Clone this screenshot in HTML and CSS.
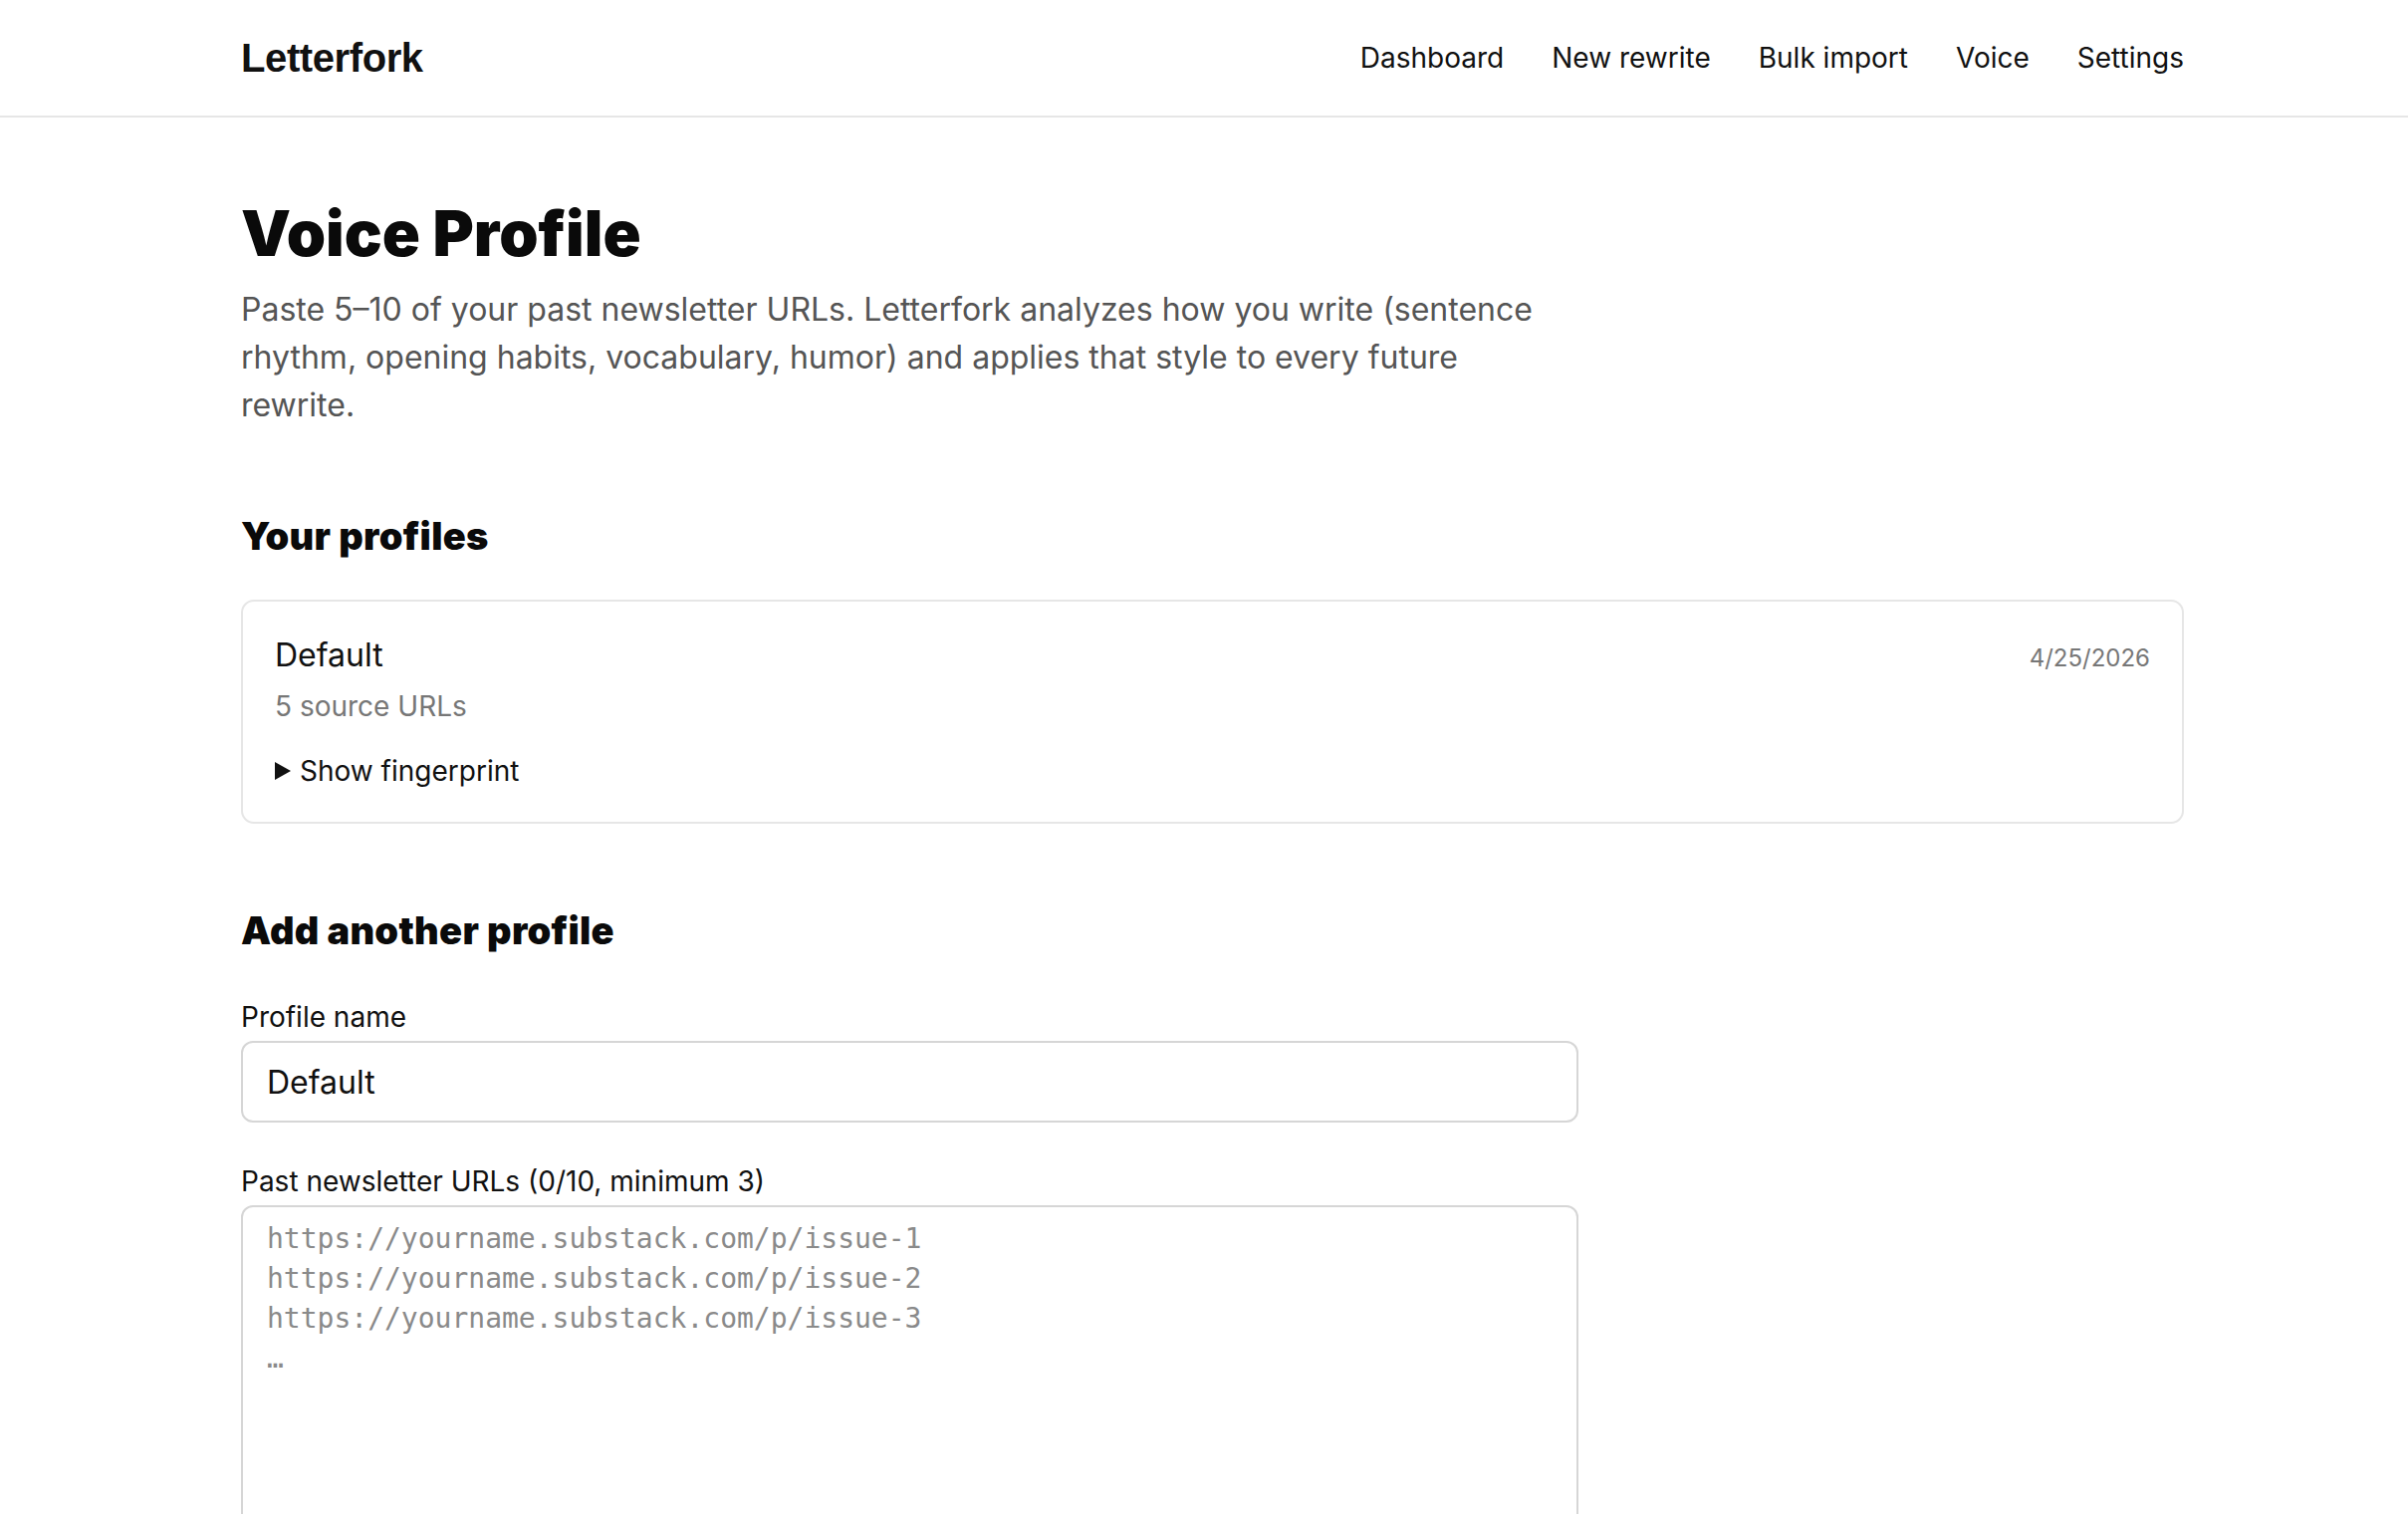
FILE: index.html
```html
<!DOCTYPE html>
<html lang="en">
<head>
    <meta charset="UTF-8">
    <meta name="viewport" content="width=device-width, initial-scale=1.0">
    <title>Voice Profile · Letterfork</title>
    <link rel="stylesheet" href="styles.css">
</head>
<body>
    <header class="topbar">
        <div class="wrap topbar-inner">
            <a class="brand" href="#">Letterfork</a>
            <nav class="nav">
                <a href="#">Dashboard</a>
                <a href="#">New rewrite</a>
                <a href="#">Bulk import</a>
                <a href="#">Voice</a>
                <a href="#">Settings</a>
            </nav>
        </div>
    </header>

    <main class="wrap page">
        <h1>Voice Profile</h1>
        <p class="lead">Paste 5–10 of your past newsletter URLs. Letterfork analyzes how you write (sentence rhythm, opening habits, vocabulary, humor) and applies that style to every future rewrite.</p>

        <!-- Saved profiles -->
        <section class="block">
            <h2>Your profiles</h2>
            <div class="profile-card">
                <div class="profile-head">
                    <span class="profile-name">Default</span>
                    <span class="profile-date">4/25/2026</span>
                </div>
                <div class="profile-meta">5 source URLs</div>
                <details class="fingerprint">
                    <summary>Show fingerprint</summary>
                </details>
            </div>
        </section>

        <!-- New profile form -->
        <section class="block">
            <h2>Add another profile</h2>
            <form class="profile-form">
                <div class="field">
                    <label for="profileName">Profile name</label>
                    <input type="text" id="profileName" value="Default">
                </div>
                <div class="field">
                    <label for="profileUrls">Past newsletter URLs (0/10, minimum 3)</label>
                    <textarea id="profileUrls" placeholder="https://yourname.substack.com/p/issue-1&#10;https://yourname.substack.com/p/issue-2&#10;https://yourname.substack.com/p/issue-3&#10;…"></textarea>
                </div>
            </form>
        </section>
    </main>
</body>
</html>
```

FILE: styles.css
```css
body {
    margin: 0;
    padding: 0;
    font-family: Inter, "Noto Sans", sans-serif;
    color: #111;
    background: #fff;
}

a {
    color: inherit;
    text-decoration: none;
}

.wrap {
    width: 1951px;
    margin-left: 242px;
}

/* Top bar */
.topbar {
    border-bottom: 2px solid #e6e6e6;
}

.topbar-inner {
    height: 116px;
    display: flex;
    justify-content: space-between;
    align-items: center;
}

.brand {
    font-family: "Liberation Sans", Arial, sans-serif;
    font-weight: 700;
    font-size: 40px;
    letter-spacing: -0.4px;
    color: #111;
}

.nav {
    display: flex;
    gap: 48px;
    font-size: 28px;
}

/* Page */
.page {
    padding-top: 80px;
    padding-bottom: 80px;
}

h1, h2 {
    font-family: Inter, "Liberation Sans", sans-serif;
    font-weight: 900;
    color: #0a0a0a;
    margin: 0;
}

h1 {
    font-size: 63px;
    line-height: 72px;
    margin-bottom: 17px;
}

h2 {
    font-size: 38px;
    line-height: 43px;
    letter-spacing: 0.3px;
    margin-bottom: 42px;
}

.lead {
    margin: 0;
    max-width: 1320px;
    font-size: 32px;
    line-height: 48px;
    color: #555;
}

.block {
    margin-top: 86px;
}

/* Profile card */
.profile-card {
    border: 2px solid #e6e6e6;
    border-radius: 13px;
    padding: 34px 32px 32px;
}

.profile-head {
    display: flex;
    justify-content: space-between;
    align-items: baseline;
}

.profile-name {
    font-size: 32px;
    line-height: 40px;
}

.profile-date {
    font-size: 24px;
    color: #777;
}

.profile-meta {
    margin-top: 12px;
    font-size: 28px;
    line-height: 38px;
    color: #777;
}

.fingerprint {
    margin-top: 27px;
    font-size: 28px;
    line-height: 38px;
}

.fingerprint summary {
    list-style: none;
    display: flex;
    align-items: center;
    gap: 9px;
    cursor: pointer;
}

.fingerprint summary::-webkit-details-marker {
    display: none;
}

/* closed disclosure triangle */
.fingerprint summary::before {
    content: "";
    width: 0;
    height: 0;
    border-left: 16px solid #111;
    border-top: 9px solid transparent;
    border-bottom: 9px solid transparent;
}

.fingerprint[open] summary::before {
    transform: rotate(90deg);
}

/* Form */
.profile-form {
    width: 1343px;
    padding-top: 4px;
}

.field {
    margin-bottom: 40px;
}

.field label {
    display: block;
    font-size: 28px;
    line-height: 38px;
    margin-bottom: 5px;
}

.field input[type="text"],
.field textarea {
    display: block;
    width: 100%;
    box-sizing: border-box;
    border: 2px solid #d6d6d6;
    border-radius: 12px;
    background: #fff;
    color: #111;
    outline: none;
}

.field input[type="text"] {
    height: 82px;
    padding: 0 24px;
    font-family: Inter, sans-serif;
    font-size: 32px;
}

.field textarea {
    height: 420px;
    padding: 12px 24px;
    font-family: "DejaVu Sans Mono", "Liberation Mono", monospace;
    font-size: 28px;
    line-height: 40px;
    resize: vertical;
}

.field textarea::placeholder {
    color: #8a8a8a;
}
```
